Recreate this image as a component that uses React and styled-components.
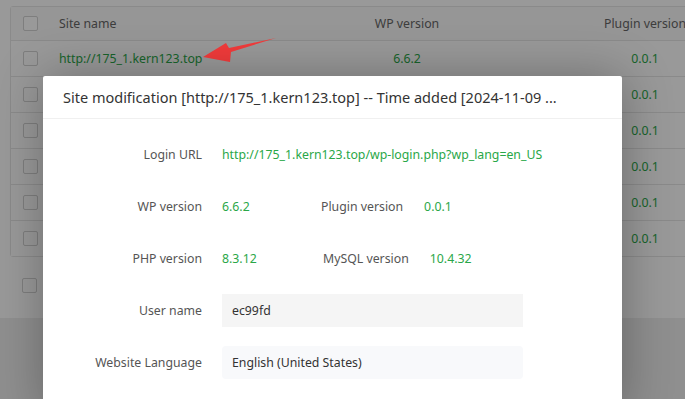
import React from "react";
import styled, { createGlobalStyle } from "styled-components";

const GlobalStyle = createGlobalStyle`
  html, body {
    margin: 0;
    padding: 0;
    width: 685px;
    height: 399px;
    overflow: hidden;
    background: #eeeeee;
    font-family: "Noto Sans", "Liberation Sans", sans-serif;
    font-size: 12.3px;
    color: #5f5f5f;
  }
`;

const Page = styled.div`
  position: relative;
  width: 685px;
  height: 399px;
  overflow: hidden;
`;

const Card = styled.div`
  background: #fff;
  height: 318px;
  padding: 6px 0 0 10px;
  box-sizing: border-box;
`;

const Table = styled.div`
  width: 900px;
  border: 1px solid #e6e6e6;
  border-radius: 3px;
`;

const Row = styled.div`
  display: grid;
  grid-template-columns: 38px 239px 238px 238px 1fr;
  align-items: center;
  height: ${(p) => (p.$head ? "33px" : "36px")};
  background: ${(p) => (p.$head ? "#fafafa" : "#fff")};
  border-top: ${(p) => (p.$first ? "none" : "1px solid #e6e6e6")};
  box-sizing: border-box;
`;

const Cell = styled.div`
  padding: 0 10px;
  text-align: ${(p) => (p.$center ? "center" : "left")};
  color: ${(p) => (p.$green ? "#2aa748" : "#666")};
  white-space: nowrap;
`;

const Check = styled.span`
  display: block;
  width: 15px;
  height: 15px;
  margin-left: 12px;
  border: 1px solid #d2d2d2;
  border-radius: 2px;
  box-sizing: border-box;
  background: #fff;
`;

const Footer = styled.div`
  display: flex;
  align-items: center;
  height: 56px;
`;

const Shade = styled.div`
  position: absolute;
  inset: 0;
  background: rgba(0, 0, 0, 0.4);
`;

const Arrow = styled.svg`
  position: absolute;
  left: 195px;
  top: 30px;
`;

const Modal = styled.div`
  position: absolute;
  left: 43px;
  top: 76px;
  width: 579px;
  height: 340px;
  background: #fff;
  border-radius: 2px;
  box-shadow: 1px 1px 50px rgba(0, 0, 0, 0.3);
`;

const ModalTitle = styled.div`
  height: 42px;
  line-height: 42px;
  padding: 0 40px 0 20px;
  font-size: 14.5px;
  color: #333;
  border-bottom: 1px solid #f0f0f0;
  white-space: nowrap;
  overflow: hidden;
`;

const ModalBody = styled.div`
  padding: 19px 0 0;
`;

const FormRow = styled.div`
  display: flex;
  align-items: center;
  height: 33px;
  margin-bottom: 19px;
`;

const Label = styled.div`
  width: 159px;
  text-align: right;
  color: #555;
  padding-right: 20px;
  flex-shrink: 0;
`;

const Value = styled.div`
  color: #2aa748;
  white-space: nowrap;
  width: ${(p) => p.$w || "auto"};
  margin-left: ${(p) => p.$ml || "0"};
`;

const InlineLabel = styled.div`
  color: #555;
  white-space: nowrap;
`;

const Input = styled.div`
  width: 301px;
  height: 33px;
  line-height: 33px;
  padding: 0 10px;
  box-sizing: border-box;
  background: ${(p) => (p.$alt ? "#f8f9fb" : "#f5f5f5")};
  border-radius: ${(p) => (p.$alt ? "4px" : "0")};
  color: #333;
`;

const rows = ["http://175_1.kern123.top", "", "", "", "", ""];

export default function App() {
  return (
    <Page>
      <GlobalStyle />
      <Card>
        <Table>
          <Row $head $first>
            <Check />
            <Cell>Site name</Cell>
            <Cell $center>WP version</Cell>
            <Cell $center>Plugin version</Cell>
            <Cell />
          </Row>
          {rows.map((r, i) => (
            <Row key={i}>
              <Check />
              <Cell $green>{r}</Cell>
              <Cell $green $center>{i === 0 ? "6.6.2" : ""}</Cell>
              <Cell $green $center>0.0.1</Cell>
              <Cell />
            </Row>
          ))}
        </Table>
        <Footer>
          <Check />
        </Footer>
      </Card>
      <Shade />
      <Arrow width="90" height="40" viewBox="0 0 90 40">
        <polygon
          points="8,27 31,13 34,18 81,8 36,22 35,32"
          fill="#f23b3b"
        />
      </Arrow>
      <Modal>
        <ModalTitle>
          Site modification [http://175_1.kern123.top] -- Time added [2024-11-09 ...
        </ModalTitle>
        <ModalBody>
          <FormRow>
            <Label>Login URL</Label>
            <Value>http://175_1.kern123.top/wp-login.php?wp_lang=en_US</Value>
          </FormRow>
          <FormRow>
            <Label>WP version</Label>
            <Value $w="99px">6.6.2</Value>
            <InlineLabel>Plugin version</InlineLabel>
            <Value $ml="21px">0.0.1</Value>
          </FormRow>
          <FormRow>
            <Label>PHP version</Label>
            <Value $w="101px">8.3.12</Value>
            <InlineLabel>MySQL version</InlineLabel>
            <Value $ml="21px">10.4.32</Value>
          </FormRow>
          <FormRow>
            <Label>User name</Label>
            <Input>ec99fd</Input>
          </FormRow>
          <FormRow>
            <Label>Website Language</Label>
            <Input $alt>English (United States)</Input>
          </FormRow>
        </ModalBody>
      </Modal>
    </Page>
  );
}
